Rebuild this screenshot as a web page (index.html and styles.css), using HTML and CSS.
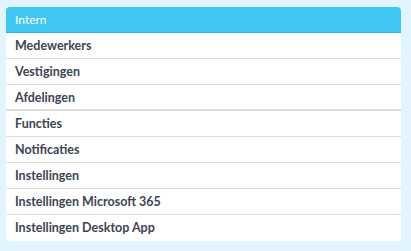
FILE: index.html
```html
<!DOCTYPE html>
<html lang="nl">
<head>
<meta charset="utf-8">
<link rel="stylesheet" href="styles.css">
</head>
<body>
<div class="page">
  <div class="card">
    <div class="card-header">Intern</div>
    <ul class="menu">
      <li class="item">Medewerkers</li>
      <li class="item">Vestigingen</li>
      <li class="item group-end">Afdelingen</li>
      <li class="item">Functies</li>
      <li class="item">Notificaties</li>
      <li class="item">Instellingen</li>
      <li class="item">Instellingen Microsoft 365</li>
      <li class="item last">Instellingen Desktop App</li>
    </ul>
  </div>
</div>
</body>
</html>
```

FILE: styles.css
```css
html, body {
  margin: 0;
  padding: 0;
  background: #e2f4fd;
  height: 100%;
}
.page {
  padding: 7px 10px 0 6px;
}
.card {
  background: #ffffff;
  border-radius: 4px;
  overflow: hidden;
  width: 395px;
}
.card-header {
  height: 25px;
  line-height: 25px;
  background: #3fc7f2;
  border-bottom: 1px solid #35b1da;
  color: #ffffff;
  font-family: "Lato", "Noto Sans", sans-serif;
  font-size: 12px;
  font-weight: 400;
  padding-left: 9px;
}
.menu {
  list-style: none;
  margin: 0;
  padding: 0;
}
.item {
  height: 25px;
  line-height: 25px;
  border-bottom: 1px solid #dedede;
  padding-left: 9px;
  font-family: "Lato", "Noto Sans", sans-serif;
  font-size: 12.5px;
  font-weight: 700;
  color: #3d4452;
}
.item.group-end {
  height: 24px;
  border-bottom: 2px solid #dedede;
}
.item.last {
  border-bottom: none;
  height: 26px;
}
```
